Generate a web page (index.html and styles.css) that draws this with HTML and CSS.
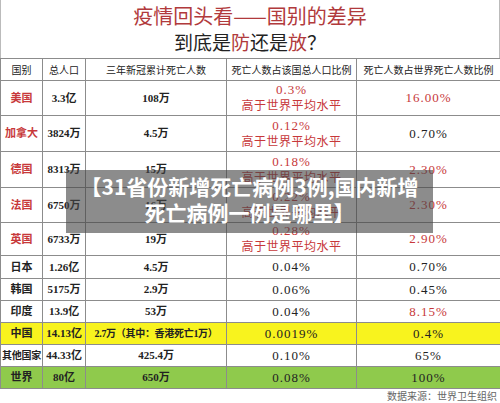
FILE: index.html
```html
<!DOCTYPE html>
<html>
	<head>
		<meta charset="UTF-8">
		<title>疫情回头看——国别的差异</title>
		<link rel="stylesheet" href="styles.css">
	</head>
	<body>
		<div class="poster">
			<div class="poster-head">
				<h1 class="poster-title">疫情回头看——国别的差异</h1>
				<p class="poster-sub">到底是<em>防</em>还是<em>放</em>？</p>
			</div>
			<table class="stat">
				<colgroup>
					<col class="col-name">
					<col class="col-pop">
					<col class="col-dead">
					<col class="col-rate">
					<col class="col-share">
				</colgroup>
				<tr class="row-head">
					<th>国别</th>
					<th>总人口</th>
					<th>三年新冠累计死亡人数</th>
					<th>死亡人数占该国总人口比例</th>
					<th>死亡人数占世界死亡人数比例</th>
				</tr>
				<tr class="h35">
					<td class="red">美国</td>
					<td>3.3亿</td>
					<td>108万</td>
					<td class="red big">0.3%<br><span class="note">高于世界平均水平</span></td>
					<td class="red big">16.00%</td>
				</tr>
				<tr class="h36">
					<td class="red">加拿大</td>
					<td>3824万</td>
					<td>4.5万</td>
					<td class="red big">0.12%<br><span class="note">高于世界平均水平</span></td>
					<td class="big">0.70%</td>
				</tr>
				<tr class="h36">
					<td class="red">德国</td>
					<td>8313万</td>
					<td>15万</td>
					<td class="red big">0.18%<br><span class="note">高于世界平均水平</span></td>
					<td class="red big">2.30%</td>
				</tr>
				<tr class="h35">
					<td class="red">法国</td>
					<td>6750万</td>
					<td>16万</td>
					<td class="red big">0.22%<br><span class="note">高于世界平均水平</span></td>
					<td class="red big">2.30%</td>
				</tr>
				<tr class="h32">
					<td class="red">英国</td>
					<td>6733万</td>
					<td>19万</td>
					<td class="red big">0.28%<br><span class="note">高于世界平均水平</span></td>
					<td class="red big">2.90%</td>
				</tr>
				<tr class="h23">
					<td>日本</td>
					<td>1.26亿</td>
					<td>4.5万</td>
					<td class="big">0.04%</td>
					<td class="big">0.70%</td>
				</tr>
				<tr class="h22">
					<td>韩国</td>
					<td>5175万</td>
					<td>2.9万</td>
					<td class="big">0.06%</td>
					<td class="big">0.45%</td>
				</tr>
				<tr class="h22">
					<td>印度</td>
					<td>13.9亿</td>
					<td>53万</td>
					<td class="big">0.04%</td>
					<td class="red big">8.15%</td>
				</tr>
				<tr class="h22 row-china">
					<td>中国</td>
					<td>14.13亿</td>
					<td class="tight">2.7万（其中：香港死亡1万）</td>
					<td class="big">0.0019%</td>
					<td class="big">0.4%</td>
				</tr>
				<tr class="h22">
					<td class="tight">其他国家</td>
					<td>44.33亿</td>
					<td>425.4万</td>
					<td class="big">0.10%</td>
					<td class="big">65%</td>
				</tr>
				<tr class="h22 row-world">
					<td>世界</td>
					<td>80亿</td>
					<td>650万</td>
					<td class="big">0.08%</td>
					<td class="big">100%</td>
				</tr>
			</table>
			<p class="poster-source">数据来源：世界卫生组织</p>
			<div class="caption">【31省份新增死亡病例3例,国内新增<br>死亡病例一例是哪里】</div>
		</div>
	</body>
</html>
```

FILE: styles.css
```css
*{
	margin: 0;
	padding: 0;
	box-sizing: border-box;
}
body{
	background: #fff;
	font-family: "Liberation Serif", "Noto Sans CJK SC", serif;
	color: #222;
}
.poster{
	width: 500px;
	height: 403px;
	position: relative;
	overflow: hidden;
}
.poster-head{
	height: 58px;
	border-left: 1px solid #bbb;
	border-right: 1px solid #bbb;
	text-align: center;
	padding-top: 3px;
}
.poster-title{
	font-family: "Noto Sans CJK SC", sans-serif;
	font-size: 20px;
	font-weight: normal;
	line-height: 26px;
	color: #b13a3c;
}
.poster-sub{
	font-family: "Noto Sans CJK SC", sans-serif;
	font-size: 19px;
	font-weight: normal;
	line-height: 26px;
	color: #222;
}
.poster-sub em{
	font-style: normal;
	color: #b13a3c;
}
.stat{
	width: 500px;
	border-collapse: collapse;
	table-layout: fixed;
}
.col-name{ width: 42px; }
.col-pop{ width: 43px; }
.col-dead{ width: 141px; }
.col-rate{ width: 130px; }
.col-share{ width: 144px; }
.stat th,.stat td{
	border: 1px solid #8c8c8c;
	text-align: center;
	vertical-align: middle;
	font-size: 11px;
	font-weight: bold;
	white-space: nowrap;
	line-height: 13px;
}
.stat th{
	font-size: 10px;
	font-weight: normal;
	font-family: "Noto Sans CJK SC", sans-serif;
}
.row-head{ height: 22px; }
.h35{ height: 35px; }
.h36{ height: 36px; }
.h32{ height: 32px; }
.h23{ height: 23px; }
.h22{ height: 22px; }
.stat td.big{
	font-size: 13px;
	font-weight: normal;
	letter-spacing: 1px;
	line-height: 16px;
}
.stat td .note{
	font-size: 12px;
	letter-spacing: 0.5px;
}
.stat td.tight{
	font-size: 10px;
	letter-spacing: -0.3px;
	padding: 0;
}
.stat td.red{
	color: #c7383a;
}
.row-china td{
	background: #f8f31e;
}
.row-world td{
	background: #8fca4c;
}
.poster-source{
	text-align: right;
	font-family: "Noto Sans CJK SC", sans-serif;
	font-size: 10px;
	line-height: 12px;
	color: #666;
	padding: 1px 3px 0 0;
}
.caption{
	position: absolute;
	left: 66px;
	top: 170px;
	width: 367px;
	height: 63px;
	padding-top: 3px;
	background: rgba(70, 70, 70, 0.62);
	color: #fff;
	font-family: "Noto Sans CJK SC", sans-serif;
	font-weight: bold;
	font-size: 21px;
	line-height: 26px;
	text-align: center;
}
```
